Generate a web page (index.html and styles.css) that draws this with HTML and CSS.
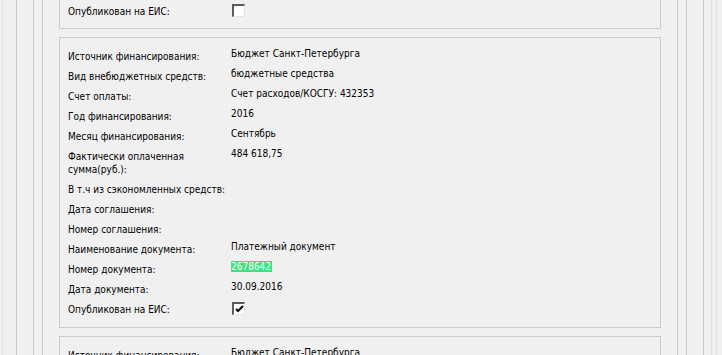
FILE: index.html
```html
<!DOCTYPE html>
<html lang="ru">
<head>
<meta charset="utf-8">
<link rel="stylesheet" href="styles.css">
</head>
<body>
<div class="frame1">
 <div class="frame2">
  <div class="frame3">
   <div class="frame4">
    <div class="frame5">
     <div class="box box-cut">
      <div class="row"><div class="lbl">Опубликован на ЕИС:</div><div class="val"><span class="cb"></span></div></div>
     </div>
     <div class="box">
      <div class="row"><div class="lbl">Источник финансирования:</div><div class="val">Бюджет Санкт-Петербурга</div></div>
      <div class="row"><div class="lbl">Вид внебюджетных средств:</div><div class="val">бюджетные средства</div></div>
      <div class="row"><div class="lbl">Счет оплаты:</div><div class="val">Счет расходов/КОСГУ: 432353</div></div>
      <div class="row"><div class="lbl">Год финансирования:</div><div class="val">2016</div></div>
      <div class="row"><div class="lbl">Месяц финансирования:</div><div class="val">Сентябрь</div></div>
      <div class="row"><div class="lbl">Фактически оплаченная сумма(руб.):</div><div class="val">484 618,75</div></div>
      <div class="row"><div class="lbl nowrap">В т.ч из сэкономленных средств:</div><div class="val"></div></div>
      <div class="row"><div class="lbl">Дата соглашения:</div><div class="val"></div></div>
      <div class="row"><div class="lbl">Номер соглашения:</div><div class="val"></div></div>
      <div class="row"><div class="lbl">Наименование документа:</div><div class="val">Платежный документ</div></div>
      <div class="row"><div class="lbl">Номер документа:</div><div class="val"><span class="hl">2678642</span></div></div>
      <div class="row"><div class="lbl">Дата документа:</div><div class="val">30.09.2016</div></div>
      <div class="row"><div class="lbl">Опубликован на ЕИС:</div><div class="val"><span class="cb"><svg width="9" height="9" viewBox="0 0 9 9"><path d="M1 4 L3 6 L8 1" fill="none" stroke="#000" stroke-width="2"/></svg></span></div></div>
     </div>
     <div class="box">
      <div class="row"><div class="lbl">Источник финансирования:</div><div class="val">Бюджет Санкт-Петербурга</div></div>
      <div class="row"><div class="lbl">Вид внебюджетных средств:</div><div class="val">бюджетные средства</div></div>
     </div>
    </div>
   </div>
  </div>
 </div>
</div>
</body>
</html>
```
FILE: styles.css
```css
html, body {
  margin: 0;
  padding: 0;
  background: #f0f0f0;
  overflow: hidden;
}
body {
  font-family: "DejaVu Sans Condensed", "DejaVu Sans", Tahoma, sans-serif;
  font-stretch: condensed;
  font-size: 10px;
  color: #000;
  -webkit-font-smoothing: none;
}
.frame1 {
  margin-left: 2px;
  width: 715px;
  box-sizing: border-box;
  border-left: 1px solid #e2e2e2;
  border-right: 1px solid #e2e2e2;
}
.frame2 {
  margin-right: 4px;
  border-right: 1px solid #e2e2e2;
}
.frame3 {
  margin-left: 13px;
  margin-right: 7px;
  border-left: 1px solid #cbcbcb;
  border-right: 1px solid #cbcbcb;
}
.frame4 {
  margin-left: 16px;
  margin-right: 16px;
  border-left: 1px solid #cbcbcb;
  border-right: 1px solid #cbcbcb;
}
.frame5 {
  margin-left: 8px;
  margin-right: 8px;
  border-left: 1px solid #cbcbcb;
  border-right: 1px solid #cbcbcb;
  padding: 0 16px;
  display: flex;
  flex-direction: column;
  gap: 8px;
}
.box {
  border: 1px solid #cbcbcb;
  padding: 8px 8px 8px 8px;
}
.box-cut {
  border-top: none;
  padding-top: 1px;
  padding-bottom: 7px;
}
.row {
  display: grid;
  grid-template-columns: 163px 1fr;
}
.lbl {
  line-height: 13px;
  padding: 4px 0 3px;
}
.nowrap { white-space: nowrap; }
.val {
  line-height: 13px;
  padding-top: 1px;
}
.hl {
  background: #40df80;
  color: #fff;
  padding: 0 1px 0 0;
}
.cb {
  display: inline-flex;
  align-items: center;
  justify-content: center;
  box-sizing: border-box;
  width: 13px;
  height: 13px;
  margin-top: 2px;
  margin-left: 1px;
  background: #fff;
  border-style: solid;
  border-width: 2px 1px 1px 2px;
  border-color: #5a5a5a #e4e4e4 #e4e4e4 #5a5a5a;
  vertical-align: top;
}
.cb svg { display: block; }
```
